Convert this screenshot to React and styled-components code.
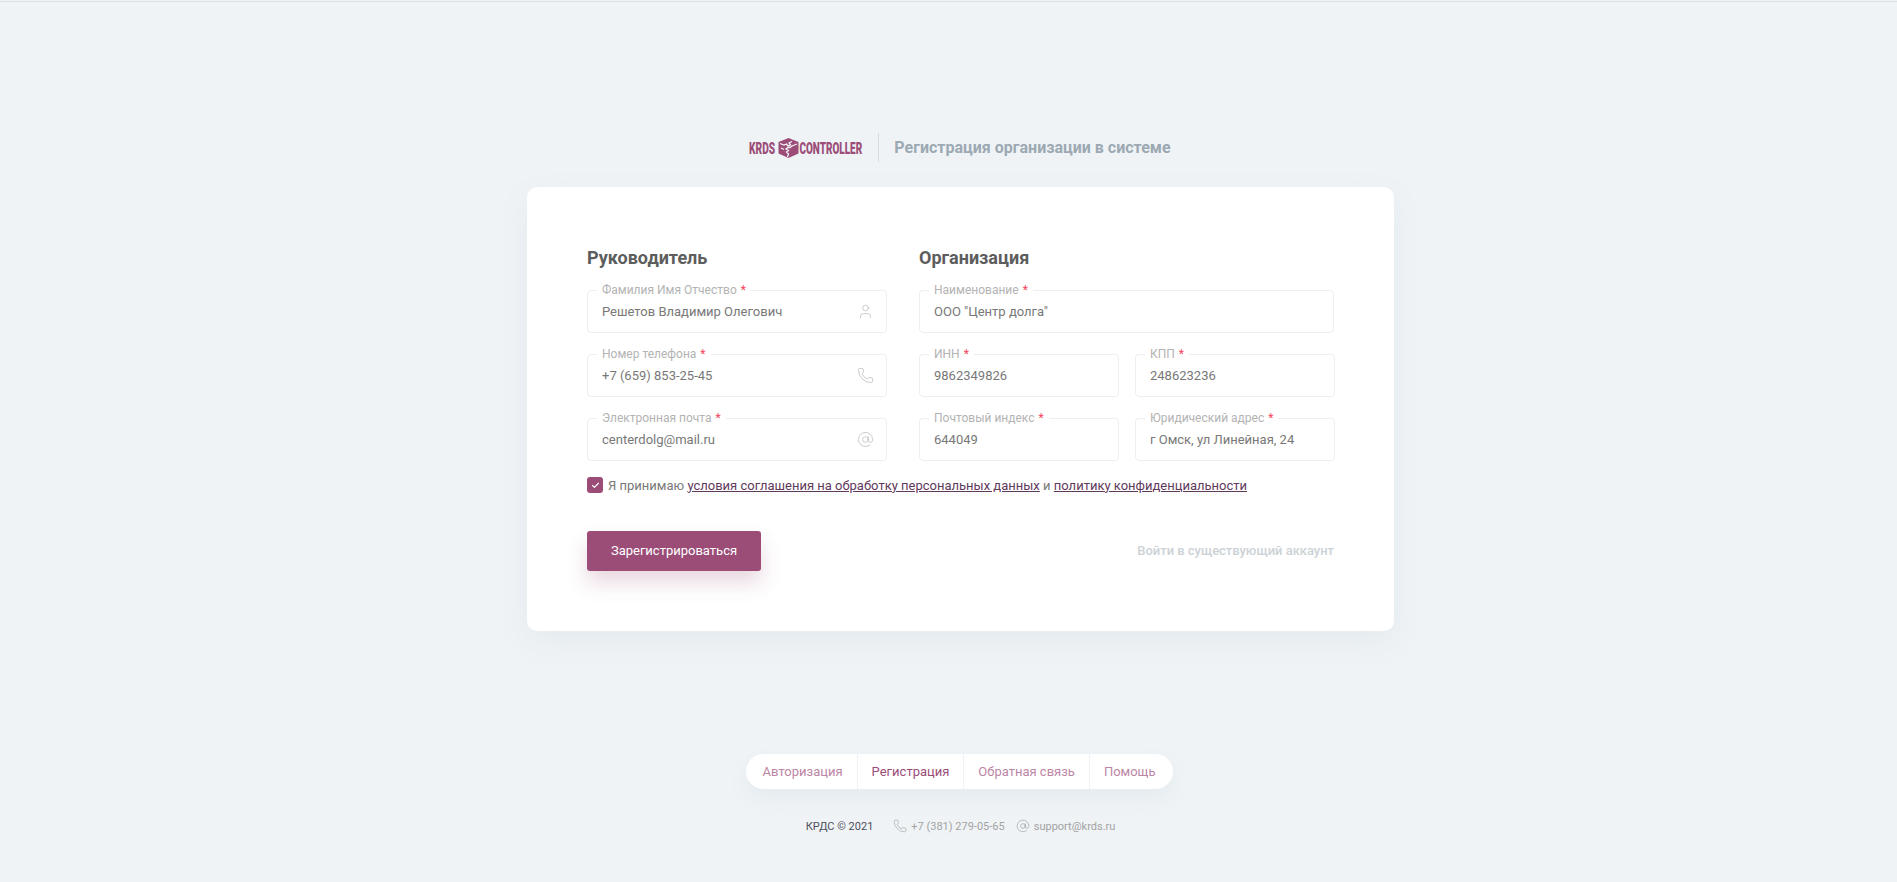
import React from 'react';
import styled, { createGlobalStyle } from 'styled-components';
import { User, Phone, AtSign, Check } from 'lucide-react';

const GlobalStyle = createGlobalStyle`
    html, body {
        margin: 0;
        padding: 0;
        background: #eff3f6;
        overflow: hidden;
    }
    * {
        box-sizing: border-box;
    }
    body {
        font-family: Roboto, "Liberation Sans", sans-serif;
    }
`;

const Logo = function Logo() {
    return (
        <LogoSvg viewBox="0 0 114 22" width="114" height="22">
            <g transform="translate(0 16.5) scale(0.6 1)">
                <LogoText fontSize="17">KRDS</LogoText>
            </g>
            <path d="M39.5 1 L49.5 5 L49.5 16.5 L39.5 21 L29.5 16.5 L29.5 5 Z" fill="#9b4d78" />
            <path d="M31 6.5 L35 8 L37.5 7 L39 9 L41.5 8 L40 6 L43 4.5 M48 7 L43 9 L41 10.5 L39 10.5 L37 12 L39.5 13.5 L37.5 15 L39.5 17 L38.5 20 M32 11 L35 12.5" fill="none" stroke="#eff3f6" strokeWidth="1.3" />
            <g transform="translate(50.5 16.5) scale(0.585 1)">
                <LogoText fontSize="17">CONTROLLER</LogoText>
            </g>
        </LogoSvg>
    );
};

const Field = function Field({ label, value, icon }) {
    return (
        <FieldBox>
            <FieldLabel>
                {label}
                <Star>*</Star>
            </FieldLabel>
            <FieldValue>{value}</FieldValue>
            {icon && <FieldIcon>{icon}</FieldIcon>}
        </FieldBox>
    );
};

const App = function App() {
    return (
        <Page>
            <GlobalStyle />
            <TopLine />
            <Header>
                <Logo />
                <HeaderDivider />
                <HeaderTitle>Регистрация организации в системе</HeaderTitle>
            </Header>

            <Card>
                <Columns>
                    <LeftColumn>
                        <SectionTitle>Руководитель</SectionTitle>
                        <Field label="Фамилия Имя Отчество" value="Решетов Владимир Олегович" icon={<User size={17} strokeWidth={1.1} />} />
                        <Field label="Номер телефона" value="+7 (659) 853-25-45" icon={<Phone size={17} strokeWidth={1.1} />} />
                        <Field label="Электронная почта" value="centerdolg@mail.ru" icon={<AtSign size={17} strokeWidth={1.1} />} />
                    </LeftColumn>
                    <RightColumn>
                        <SectionTitle>Организация</SectionTitle>
                        <Field label="Наименование" value={'ООО "Центр долга"'} />
                        <FieldPair>
                            <Field label="ИНН" value="9862349826" />
                            <Field label="КПП" value="248623236" />
                        </FieldPair>
                        <FieldPair>
                            <Field label="Почтовый индекс" value="644049" />
                            <Field label="Юридический адрес" value="г Омск, ул Линейная, 24" />
                        </FieldPair>
                    </RightColumn>
                </Columns>

                <Agreement>
                    <CheckBox>
                        <Check size={9} strokeWidth={3} color="#fff" />
                    </CheckBox>
                    <span>
                        Я принимаю
                        {' '}
                        <TermsLink>условия соглашения на обработку персональных данных</TermsLink>
                        {' '}
                        и
                        {' '}
                        <TermsLink>политику конфиденциальности</TermsLink>
                    </span>
                </Agreement>

                <Actions>
                    <SubmitButton>Зарегистрироваться</SubmitButton>
                    <LoginLink>Войти в существующий аккаунт</LoginLink>
                </Actions>
            </Card>

            <FooterNav>
                <NavItem>Авторизация</NavItem>
                <NavItem $active>Регистрация</NavItem>
                <NavItem>Обратная связь</NavItem>
                <NavItem>Помощь</NavItem>
            </FooterNav>

            <FooterInfo>
                <Copyright>КРДС © 2021</Copyright>
                <ContactPhone>
                    <Phone size={14} strokeWidth={1.1} />
                    +7 (381) 279-05-65
                </ContactPhone>
                <ContactMail>
                    <AtSign size={14} strokeWidth={1.2} />
                    support@krds.ru
                </ContactMail>
            </FooterInfo>
        </Page>
    );
};

const Page = styled.div`
    width: 1921px;
    height: 882px;
    display: flex;
    flex-direction: column;
    align-items: center;
`;
const TopLine = styled.div`
    align-self: stretch;
    height: 2px;
    border-bottom: 1px solid #dcdfe2;
`;
const Header = styled.header`
    display: flex;
    align-items: center;
    margin: 131px 1px 0 0;
    height: 29px;
`;
const LogoSvg = styled.svg`
    display: block;
`;
const LogoText = styled.text`
    font-family: Roboto, sans-serif;
    font-weight: 900;
    fill: #9b4d78;
`;
const HeaderDivider = styled.div`
    width: 1px;
    height: 29px;
    background: #d9dde0;
    margin: 0 15px;
`;
const HeaderTitle = styled.h1`
    margin: 0;
    font-size: 16px;
    font-weight: 700;
    color: #9ca9b3;
`;
const Card = styled.main`
    width: 867px;
    height: 444px;
    margin-top: 25px;
    padding: 60px 60px 0;
    background: #fff;
    border-radius: 10px;
    box-shadow: 0 10px 30px rgba(120, 135, 150, 0.08);
`;
const Columns = styled.div`
    display: flex;
    gap: 32px;
`;
const LeftColumn = styled.section`
    width: 300px;
    flex: none;
    display: flex;
    flex-direction: column;
    gap: 21px;
`;
const RightColumn = styled(LeftColumn)`
    width: 415px;
`;
const SectionTitle = styled.h2`
    margin: 0 0 1px;
    height: 21px;
    line-height: 21px;
    font-size: 18px;
    font-weight: 700;
    color: #5d5d5d;
`;
const FieldPair = styled.div`
    display: grid;
    grid-template-columns: 200px 200px;
    gap: 16px;
`;
const FieldBox = styled.div`
    position: relative;
    height: 43px;
    display: flex;
    align-items: center;
    padding: 0 12px 0 14px;
    border: 1px solid #eceef0;
    border-radius: 4px;
`;
const FieldLabel = styled.label`
    position: absolute;
    top: -7px;
    left: 9px;
    padding: 0 5px;
    background: #fff;
    font-size: 12px;
    line-height: 13px;
    color: #b3b3b3;
`;
const Star = styled.span`
    margin-left: 4px;
    color: #f5455c;
`;
const FieldValue = styled.div`
    font-size: 13px;
    color: #787878;
`;
const FieldIcon = styled.span`
    margin-left: auto;
    display: flex;
    color: #bdbdbd;
`;
const Agreement = styled.div`
    display: flex;
    align-items: center;
    gap: 5px;
    margin-top: 16px;
    height: 16px;
    font-size: 13px;
    color: #787878;
`;
const CheckBox = styled.span`
    width: 16px;
    height: 16px;
    display: flex;
    align-items: center;
    justify-content: center;
    border-radius: 3px;
    background: #9b4d78;
`;
const TermsLink = styled.a`
    color: #5f3a5c;
    text-decoration: underline;
`;
const Actions = styled.div`
    display: flex;
    align-items: center;
    justify-content: space-between;
    margin-top: 38px;
`;
const SubmitButton = styled.button`
    width: 174px;
    height: 40px;
    padding: 0 0 1px;
    border: none;
    border-radius: 3px;
    background: #9b4d78;
    color: #fff;
    font-family: inherit;
    font-size: 13px;
    font-weight: 400;
    box-shadow: 0 12px 20px rgba(155, 77, 120, 0.22);
`;
const LoginLink = styled.a`
    margin-bottom: 1px;
    font-size: 13px;
    font-weight: 500;
    letter-spacing: -0.03px;
    color: #ccd2d6;
`;
const FooterNav = styled.nav`
    display: flex;
    margin: 123px 2px 0 0;
    height: 35px;
    background: #fff;
    border-radius: 18px;
    box-shadow: 0 10px 20px rgba(120, 135, 150, 0.07);
`;
const NavItem = styled.a`
    display: flex;
    align-items: center;
    padding: 0 14px;
    font-size: 13px;
    color: ${(props) => (props.$active ? '#9b4d78' : '#bd85a6')};
    & + & {
        border-left: 1px solid #eff3f6;
    }
    &:first-child {
        padding-left: 17px;
    }
    &:last-child {
        padding-right: 18px;
    }
`;
const FooterInfo = styled.footer`
    display: flex;
    align-items: center;
    margin-top: 30px;
    font-size: 11px;
    color: #a3a3a3;
`;
const Copyright = styled.span`
    color: #4f4f5c;
    margin-right: 20px;
`;
const ContactPhone = styled.span`
    display: flex;
    align-items: center;
    gap: 4px;
    margin-right: 11px;
`;
const ContactMail = styled(ContactPhone)`
    margin-right: 0;
`;

export default App;
